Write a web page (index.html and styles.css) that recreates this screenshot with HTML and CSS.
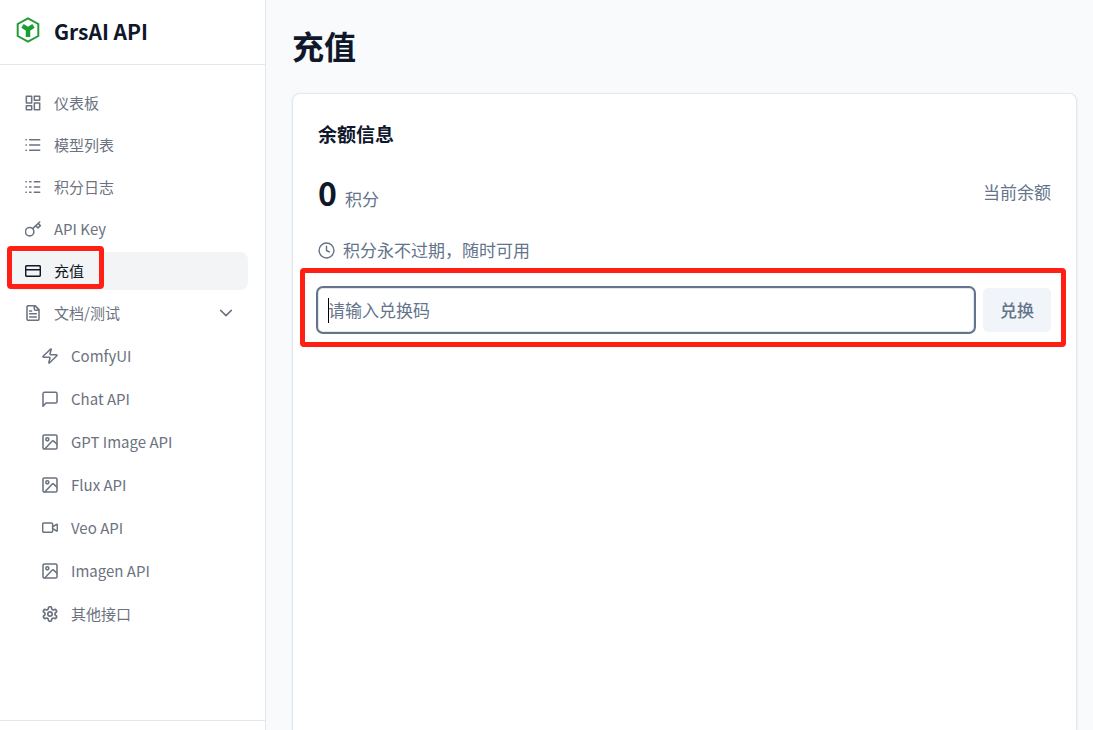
FILE: index.html
```html
<!DOCTYPE html>
<html lang="zh-CN">
<head>
    <meta charset="UTF-8">
    <meta name="viewport" content="width=device-width, initial-scale=1.0">
    <title>充值 - GrsAI API</title>
    <link rel="stylesheet" href="styles.css">
</head>
<body>
    <svg class="sprite" aria-hidden="true">
        <symbol id="icon-image" viewBox="0 0 24 24">
            <rect x="1.500" y="1.500" width="21" height="21" rx="2"/>
            <circle cx="8" cy="8" r="2.300"/>
            <path d="M22 15l-4-4a2 2 0 0 0-3 0L4.500 22"/>
        </symbol>
    </svg>
    <div class="layout">
        <aside class="sidebar">
            <div class="brand">
                <svg class="logo" viewBox="0 0 24 26">
                    <path d="M12 1.300L22.300 7v12L12 24.700 1.700 19V7z" fill="none" stroke="#259b38" stroke-width="2"/>
                    <path d="M6.500 8.800L12 12.300 17.500 8.800M12 12v8" fill="none" stroke="#18a034" stroke-width="4.500" stroke-linejoin="round"/>
                </svg>
                <span class="brand-name">GrsAI API</span>
            </div>
            <nav class="nav">
                <ul class="nav-list">
                    <li><a href="#" class="nav-link">
                        <svg class="icon" viewBox="0 0 24 24"><rect x="2" y="2" width="8" height="10"/><rect x="14" y="2" width="8" height="6"/><rect x="14" y="12" width="8" height="10"/><rect x="2" y="16" width="8" height="6"/></svg>
                        仪表板
                    </a></li>
                    <li><a href="#" class="nav-link">
                        <svg class="icon" viewBox="0 0 24 24"><path d="M7 4h15M7 12h15M7 20h15M1.500 4h.5M1.500 12h.5M1.500 20h.5"/></svg>
                        模型列表
                    </a></li>
                    <li><a href="#" class="nav-link">
                        <svg class="icon" viewBox="0 0 24 24"><path d="M14 4h8M14 12h8M14 20h8M1.500 4h.5M1.500 12h.5M1.500 20h.5M7 4h2M7 12h2M7 20h2"/></svg>
                        积分日志
                    </a></li>
                    <li><a href="#" class="nav-link">
                        <svg class="icon" viewBox="0 0 24 24"><circle cx="7" cy="16" r="6.300"/><path d="M11.500 11.500L22 1.500M16 7l3.500 3.500L23 7l-3.300-3.300"/></svg>
                        API Key
                    </a></li>
                    <li class="marked"><a href="#" class="nav-link active">
                        <svg class="icon" viewBox="0 0 24 24"><rect x="1" y="4" width="22" height="16" rx="2"/><path d="M1 10h22"/></svg>
                        充值
                    </a><span class="mark mark-nav"></span></li>
                    <li><button type="button" class="nav-link">
                        <svg class="icon" viewBox="0 0 24 24"><path d="M15 1H5a2 2 0 0 0-2 2v18a2 2 0 0 0 2 2h14a2 2 0 0 0 2-2V7zM14 1v5a2 2 0 0 0 2 2h5M7 9h3M7 13h10M7 18h10"/></svg>
                        文档/测试
                        <svg class="icon chevron" viewBox="0 0 24 24"><path d="M4 8l8 8 8-8"/></svg>
                    </button></li>
                </ul>
                <ul class="nav-list sub-list">
                    <li><a href="#" class="nav-link">
                        <svg class="icon" viewBox="0 0 24 24"><path d="M2.500 14a1 1 0 0 1-.800-1.600L13 1.500a.5.5 0 0 1 .8.500L12 9a1 1 0 0 0 1 1h8.500a1 1 0 0 1 .8 1.600L11 22.500a.5.5 0 0 1-.8-.5L12 15a1 1 0 0 0-1-1z"/></svg>
                        ComfyUI
                    </a></li>
                    <li><a href="#" class="nav-link">
                        <svg class="icon" viewBox="0 0 24 24"><path d="M22.500 16a2 2 0 0 1-2 2H6l-4.500 5V4a2 2 0 0 1 2-2h17a2 2 0 0 1 2 2z"/></svg>
                        Chat API
                    </a></li>
                    <li><a href="#" class="nav-link"><svg class="icon"><use href="#icon-image"/></svg>GPT Image API</a></li>
                    <li><a href="#" class="nav-link"><svg class="icon"><use href="#icon-image"/></svg>Flux API</a></li>
                    <li><a href="#" class="nav-link">
                        <svg class="icon" viewBox="0 0 24 24"><rect x="1" y="4.500" width="15" height="14" rx="2"/><path d="M16 10l6-3.500a.7.7 0 0 1 1 .5v9a.7.7 0 0 1-1 .5l-6-3.500"/></svg>
                        Veo API
                    </a></li>
                    <li><a href="#" class="nav-link"><svg class="icon"><use href="#icon-image"/></svg>Imagen API</a></li>
                    <li><a href="#" class="nav-link">
                        <svg class="icon" viewBox="1 1 22 22"><path d="M12.220 2h-.44a2 2 0 0 0-2 2v.18a2 2 0 0 1-1 1.730l-.43.250a2 2 0 0 1-2 0l-.15-.080a2 2 0 0 0-2.730.730l-.22.380a2 2 0 0 0 .73 2.730l.15.100a2 2 0 0 1 1 1.720v.510a2 2 0 0 1-1 1.740l-.15.090a2 2 0 0 0-.73 2.730l.22.380a2 2 0 0 0 2.730.730l.15-.080a2 2 0 0 1 2 0l.43.250a2 2 0 0 1 1 1.730V20a2 2 0 0 0 2 2h.44a2 2 0 0 0 2-2v-.18a2 2 0 0 1 1-1.730l.43-.250a2 2 0 0 1 2 0l.15.080a2 2 0 0 0 2.730-.730l.22-.390a2 2 0 0 0-.73-2.730l-.15-.080a2 2 0 0 1-1-1.740v-.5a2 2 0 0 1 1-1.740l.15-.090a2 2 0 0 0 .73-2.730l-.22-.380a2 2 0 0 0-2.730-.730l-.15.080a2 2 0 0 1-2 0l-.43-.250a2 2 0 0 1-1-1.730V4a2 2 0 0 0-2-2z"/><circle cx="12" cy="12" r="3"/></svg>
                        其他接口
                    </a></li>
                </ul>
            </nav>
            <div class="sidebar-footer"></div>
        </aside>
        <main class="content">
            <h1 class="page-title">充值</h1>
            <section class="card">
                <h2 class="card-title">余额信息</h2>
                <div class="balance">
                    <p class="amount"><strong class="amount-value">0</strong> <span>积分</span></p>
                    <span>当前余额</span>
                </div>
                <p class="note">
                    <svg class="icon icon-clock" viewBox="0 0 24 24"><circle cx="12" cy="12" r="10.500"/><path d="M12 6v6l4 2"/></svg>
                    积分永不过期，随时可用
                </p>
                <form class="redeem">
                    <div class="field">
                        <input type="text" class="code-input" placeholder="请输入兑换码" aria-label="请输入兑换码">
                        <span class="caret"></span>
                    </div>
                    <button type="button" class="redeem-btn">兑换</button>
                    <span class="mark mark-form"></span>
                </form>
            </section>
        </main>
    </div>
</body>
</html>
```
FILE: styles.css
```css
* {
    box-sizing: border-box;
}
body {
    margin: 0;
    background-color: #f8fafc;
    color: #0f172a;
    font-family: "Noto Sans CJK SC", sans-serif;
    font-size: 17px;
    line-height: 24px;
}
h1, h2, p, ul {
    margin: 0;
    padding: 0;
}
ul {
    list-style: none;
}
.sprite {
    display: none;
}
.layout {
    display: flex;
    height: 100vh;
    overflow: hidden;
}

/* sidebar */
.sidebar {
    display: flex;
    flex-direction: column;
    flex: none;
    width: 266px;
    background-color: white;
    border-right: 1px solid #e5e7eb;
}
.brand {
    display: flex;
    align-items: center;
    gap: 14px;
    height: 65px;
    padding: 0 16px 2px;
    border-bottom: 1px solid #e5e7eb;
}
.logo {
    width: 24px;
    height: 26px;
    margin-bottom: 2px;
}
.brand-name {
    font-size: 21px;
    font-weight: bold;
}
.nav {
    flex: 1;
    padding: 19px 17px 0 8px;
}
.nav-list {
    display: flex;
    flex-direction: column;
    gap: 4px;
}
.sub-list {
    gap: 5px;
    margin-top: 5px;
    padding-left: 17px;
}
.nav-link {
    display: flex;
    align-items: center;
    gap: 13px;
    width: 100%;
    height: 38px;
    padding: 0 14px 0 17px;
    border: none;
    border-radius: 8px;
    background-color: transparent;
    color: #6b7280;
    font-family: inherit;
    font-size: 15px;
    line-height: 24px;
    text-decoration: none;
    cursor: pointer;
}
.active {
    background-color: #f3f4f6;
    color: #111827;
}
.icon {
    flex: none;
    width: 16px;
    height: 16px;
    fill: none;
    stroke: currentColor;
    stroke-width: 2.3;
    stroke-linecap: round;
    stroke-linejoin: round;
}
.chevron {
    margin-left: auto;
}
.sidebar-footer {
    height: 10px;
    border-top: 1px solid #e5e7eb;
}

/* content */
.content {
    display: flex;
    flex-direction: column;
    flex: 1;
    min-width: 0;
    padding: 26px 16px 0 26px;
}
.page-title {
    margin-bottom: 29px;
    font-size: 32px;
    line-height: 38px;
}
.card {
    flex: 1;
    padding: 27px 25px 0;
    background-color: white;
    border: 1px solid #e2e8f0;
    border-bottom: none;
    border-radius: 8px 8px 0 0;
    box-shadow: 0 1px 3px rgba(0, 0, 0, 0.08);
    color: #64748b;
}
.card-title {
    margin-bottom: 27px;
    color: #0f172a;
    font-size: 19px;
    line-height: 26px;
}
.balance {
    display: flex;
    justify-content: space-between;
    align-items: center;
    height: 36px;
    margin-bottom: 28px;
}
.amount {
    display: flex;
    align-items: baseline;
    gap: 8px;
}
.amount-value {
    color: #0f172a;
    font-size: 32px;
    line-height: 36px;
}
.note {
    display: flex;
    align-items: center;
    gap: 8px;
    margin-bottom: 26px;
}
.icon-clock {
    width: 17px;
    height: 17px;
    stroke-width: 2;
}
.redeem {
    position: relative;
    display: flex;
    gap: 9px;
}
.field {
    position: relative;
    flex: 1;
}
.code-input {
    display: block;
    width: 100%;
    height: 44px;
    padding: 0 9px 2px;
    border: 1px solid #e2e8f0;
    border-radius: 5px;
    outline: 2px solid #64748b;
    background-color: white;
    color: #0f172a;
    font-family: inherit;
    font-size: 17px;
}
.code-input::placeholder {
    color: #64748b;
}
.caret {
    position: absolute;
    top: 10px;
    left: 10px;
    width: 1px;
    height: 25px;
    background-color: black;
}
.redeem-btn {
    width: 68px;
    height: 44px;
    padding: 0 0 2px;
    border: none;
    border-radius: 5px;
    background-color: #f1f5f9;
    color: #64748b;
    font-family: inherit;
    font-size: 17px;
    font-weight: 500;
    cursor: pointer;
}

/* red highlight frames */
.marked {
    position: relative;
}
.mark {
    position: absolute;
    border: 5px solid #ff1f13;
    border-radius: 4px;
    pointer-events: none;
}
.mark-nav {
    top: -6px;
    left: -1px;
    width: 97px;
    height: 43px;
}
.mark-form {
    top: -20px;
    right: -15px;
    bottom: -15px;
    left: -18px;
}
```
